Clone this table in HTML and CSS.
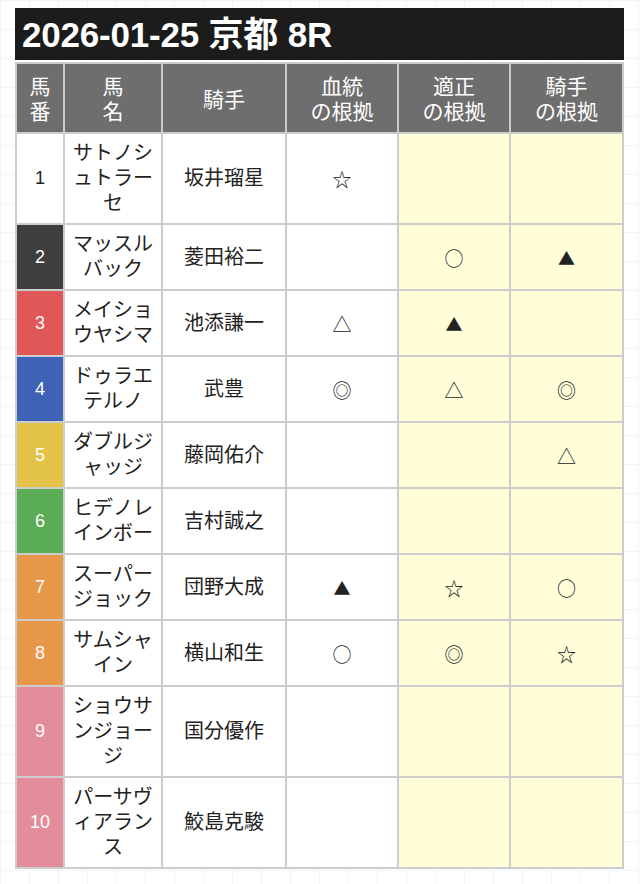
FILE: index.html
```html
<!DOCTYPE html>
<html lang="ja">
<head>
<meta charset="utf-8">
<title>2026-01-25 京都 8R</title>
<link rel="stylesheet" href="styles.css">
</head>
<body>
<div class="page">
  <h1 class="title">2026-01-25 京都 8R</h1>
  <table class="race">
    <colgroup>
      <col class="c-num"><col class="c-name"><col class="c-jockey"><col class="c-mark"><col class="c-mark"><col class="c-mark2">
    </colgroup>
    <thead>
      <tr>
        <th>馬<br>番</th>
        <th>馬<br>名</th>
        <th>騎手</th>
        <th>血統<br>の根拠</th>
        <th>適正<br>の根拠</th>
        <th>騎手<br>の根拠</th>
      </tr>
    </thead>
    <tbody>
      <tr><td class="num w1">1</td><td class="name">サトノシュトラーセ</td><td class="jockey">坂井瑠星</td><td class="mark">☆</td><td class="mark hl"></td><td class="mark hl"></td></tr>
      <tr><td class="num w2">2</td><td class="name">マッスルバック</td><td class="jockey">菱田裕二</td><td class="mark"></td><td class="mark hl">○</td><td class="mark hl"><span class="tri">▲</span></td></tr>
      <tr><td class="num w3">3</td><td class="name">メイショウヤシマ</td><td class="jockey">池添謙一</td><td class="mark">△</td><td class="mark hl"><span class="tri">▲</span></td><td class="mark hl"></td></tr>
      <tr><td class="num w4">4</td><td class="name">ドゥラエテルノ</td><td class="jockey">武豊</td><td class="mark">◎</td><td class="mark hl">△</td><td class="mark hl">◎</td></tr>
      <tr><td class="num w5">5</td><td class="name">ダブルジャッジ</td><td class="jockey">藤岡佑介</td><td class="mark"></td><td class="mark hl"></td><td class="mark hl">△</td></tr>
      <tr><td class="num w6">6</td><td class="name">ヒデノレインボー</td><td class="jockey">吉村誠之</td><td class="mark"></td><td class="mark hl"></td><td class="mark hl"></td></tr>
      <tr><td class="num w7">7</td><td class="name">スーパージョック</td><td class="jockey">団野大成</td><td class="mark"><span class="tri">▲</span></td><td class="mark hl">☆</td><td class="mark hl">○</td></tr>
      <tr><td class="num w7">8</td><td class="name">サムシャイン</td><td class="jockey">横山和生</td><td class="mark">○</td><td class="mark hl">◎</td><td class="mark hl">☆</td></tr>
      <tr><td class="num w8">9</td><td class="name">ショウサンジョージ</td><td class="jockey">国分優作</td><td class="mark"></td><td class="mark hl"></td><td class="mark hl"></td></tr>
      <tr><td class="num w8">10</td><td class="name">パーサヴィアランス</td><td class="jockey">鮫島克駿</td><td class="mark"></td><td class="mark hl"></td><td class="mark hl"></td></tr>
    </tbody>
  </table>
</div>
</body>
</html>
```
FILE: styles.css
```css
html, body {
  margin: 0;
  padding: 0;
}
body {
  background-color: #ffffff;
  background-image:
    linear-gradient(to right, #f3f4f7 1px, transparent 1px),
    linear-gradient(to bottom, #f3f4f7 1px, transparent 1px);
  background-size: 29px 29px;
  font-family: "Liberation Sans", "Noto Sans CJK JP", sans-serif;
  color: #222222;
}
.page {
  padding: 8px 16px 0 15px;
  width: 609px;
}
.title {
  margin: 0 0 2px 0;
  height: 52px;
  line-height: 54px;
  background: #1c1c1c;
  color: #ffffff;
  font-size: 35px;
  font-weight: bold;
  padding-left: 7px;
  letter-spacing: -0.2px;
}
.race {
  width: 609px;
  table-layout: fixed;
  border-collapse: collapse;
  border: 2px solid #cccccc;
}
.c-num { width: 48px; }
.c-name { width: 98px; }
.c-jockey { width: 124px; }
.c-mark { width: 112px; }
.c-mark2 { width: 113px; }
.race th, .race td {
  border: 2px solid #cccccc;
  text-align: center;
  vertical-align: middle;
  font-size: 20px;
  line-height: 25px;
}
.race th {
  background: #6e6e6e;
  color: #ffffff;
  font-weight: normal;
  font-size: 21px;
  padding: 10px 0 8px;
}
.race td {
  background: #ffffff;
  padding: 7px 0;
}
.race td.name {
  padding: 7px 8px;
  line-break: loose;
  word-break: break-all;
}
.race td.num {
  font-size: 18px;
  color: #ffffff;
}
.race td.mark {
  font-size: 19px;
  font-family: "Noto Sans CJK JP", sans-serif;
}
.race td.mark .tri {
  font-size: 17px;
}
.race td.hl { background: #fffed8; }
.race td.w1 { background: #ffffff; color: #222222; }
.race td.w2 { background: #3e3e3e; }
.race td.w3 { background: #df5757; }
.race td.w4 { background: #3e63b6; }
.race td.w5 { background: #e2c347; }
.race td.w6 { background: #5aac57; }
.race td.w7 { background: #e7974a; }
.race td.w8 { background: #e38d9b; }
```
